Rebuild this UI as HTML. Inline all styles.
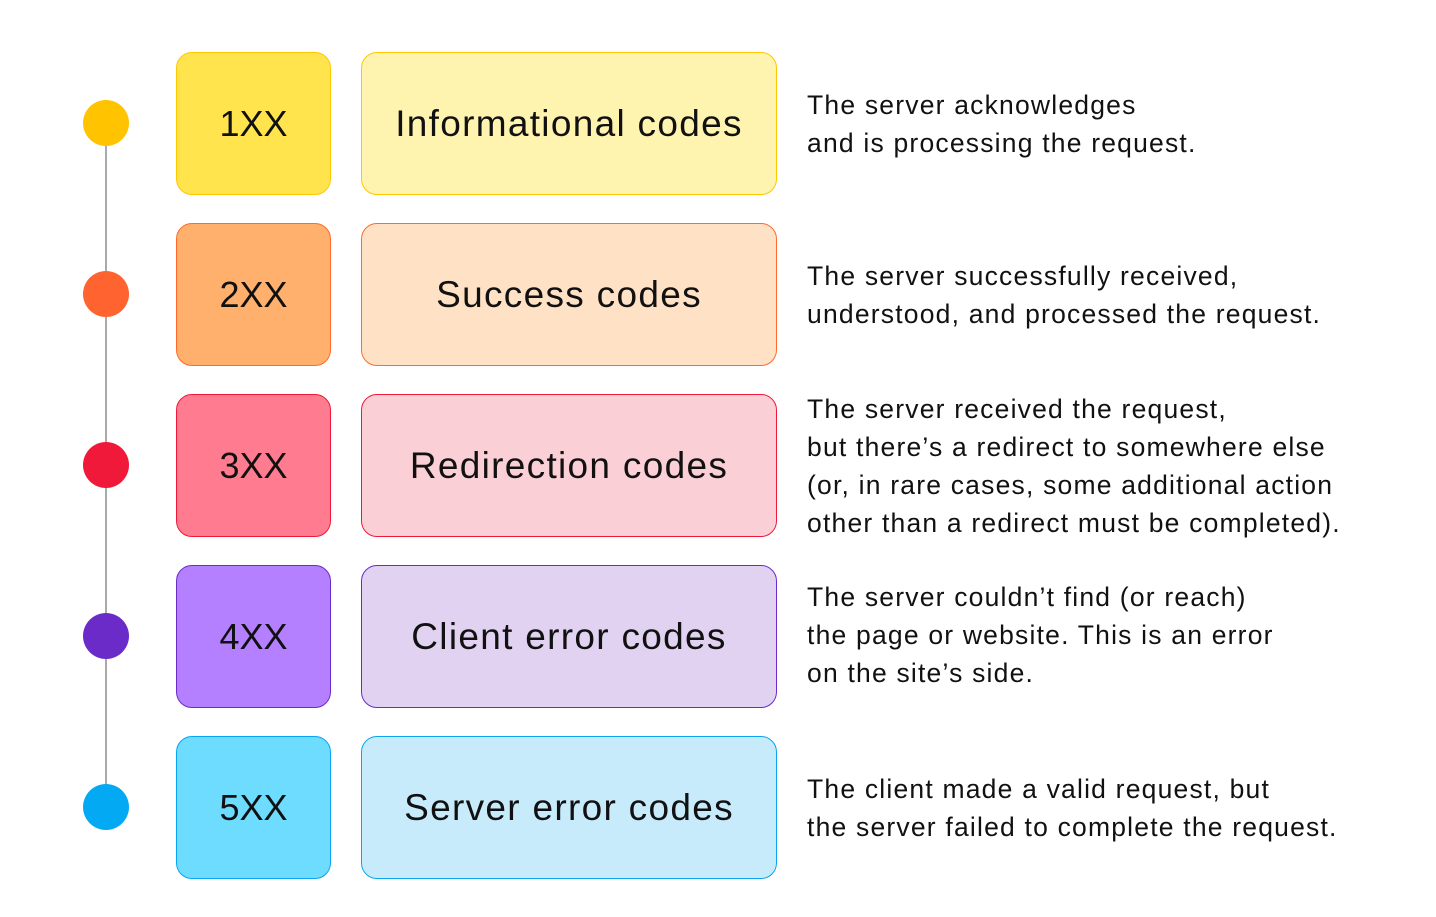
<html><head><style>
body{margin:0;width:1436px;height:917px;background:#fff;position:relative;font-family:"Liberation Sans",sans-serif;overflow:hidden}
.line{position:absolute;left:105px;top:123px;width:1.5px;height:684px;background:#aaa}
.dot{position:absolute;left:83px;width:46px;height:46px;border-radius:50%}
.b1,.b2{position:absolute;box-sizing:border-box;border:1.5px solid;border-radius:16px;height:143px;display:flex;align-items:center;justify-content:center;font-size:36px;color:#111}
.b1{left:176px;width:155px}
.b2{left:361px;width:416px;font-size:37px;letter-spacing:1.3px}
.d{position:absolute;left:807px;font-size:26.5px;letter-spacing:1.2px;line-height:38px;color:#111;display:flex;align-items:center;height:143px;white-space:nowrap}
</style></head><body>
<div class="line"></div>

<div class="dot" style="top:100px;background:#FFC300"></div>
<div class="b1" style="top:52px;background:#FFE44D;border-color:#FFC800">1XX</div>
<div class="b2" style="top:52px;background:#FFF3B0;border-color:#FFC800">Informational codes</div>
<div class="d" style="top:52px">The server acknowledges<br>and is processing the request.</div>

<div class="dot" style="top:271px;background:#FF632F"></div>
<div class="b1" style="top:223px;background:#FFB06C;border-color:#FF6A2C">2XX</div>
<div class="b2" style="top:223px;background:#FFE2C6;border-color:#FF6A2C">Success codes</div>
<div class="d" style="top:223px">The server successfully received,<br>understood, and processed the request.</div>

<div class="dot" style="top:442px;background:#F0193A"></div>
<div class="b1" style="top:394px;background:#FF7B8F;border-color:#F0193A">3XX</div>
<div class="b2" style="top:394px;background:#FAD0D6;border-color:#F0193A">Redirection codes</div>
<div class="d" style="top:394px">The server received the request,<br>but there’s a redirect to somewhere else<br>(or, in rare cases, some additional action<br>other than a redirect must be completed).</div>

<div class="dot" style="top:613px;background:#6A2BC8"></div>
<div class="b1" style="top:565px;background:#B580FF;border-color:#6A2BC8">4XX</div>
<div class="b2" style="top:565px;background:#E0D2F0;border-color:#6A2BC8">Client error codes</div>
<div class="d" style="top:563px">The server couldn’t find (or reach)<br>the page or website. This is an error<br>on the site’s side.</div>

<div class="dot" style="top:784px;background:#04A9F4"></div>
<div class="b1" style="top:736px;background:#6DDCFF;border-color:#0AA5F0">5XX</div>
<div class="b2" style="top:736px;background:#C8EBFC;border-color:#0AA5F0">Server error codes</div>
<div class="d" style="top:736px">The client made a valid request, but<br>the server failed to complete the request.</div>
</body></html>
